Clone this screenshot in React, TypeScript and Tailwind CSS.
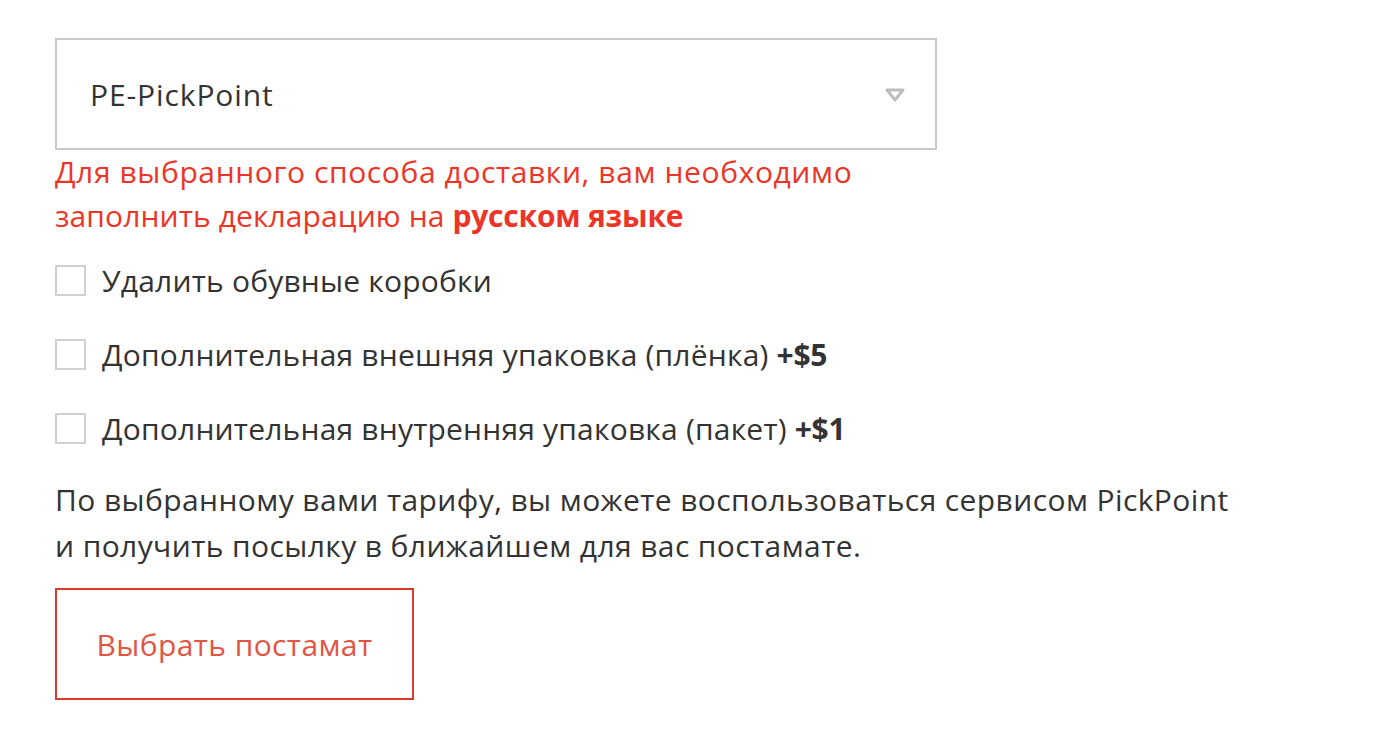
import React from "react";

const font = { fontFamily: '"Open Sans", "Noto Sans", sans-serif' };

function Check({ children }: { children: React.ReactNode }) {
  return (
    <label className="flex items-center h-[31px]">
      <span className="w-[31px] h-[31px] border-2 border-[#d0d0d0] bg-white shrink-0" />
      <span className="ml-[16px] text-[30px] tracking-[0.2px] text-[#333333] leading-none whitespace-nowrap">
        {children}
      </span>
    </label>
  );
}

export default function App() {
  return (
    <div className="min-h-screen bg-white pl-[55px] pt-[38px]" style={font}>
      {/* select */}
      <div className="w-[882px] h-[112px] border-2 border-[#c8c8c8] flex items-center justify-between pl-[33px] pr-[30px]">
        <span className="text-[30px] tracking-[0.9px] text-[#333333]">PE-PickPoint</span>
        <svg width="20" height="14" viewBox="0 0 20 14" className="mt-[2px]">
          <path d="M2 2 H18 L10 12 Z" fill="none" stroke="#bdbdbd" strokeWidth="3" strokeLinejoin="round" />
        </svg>
      </div>

      <p className="text-[30px] tracking-[0.6px] leading-[44px] text-[#ec3527] w-[900px]">
        Для выбранного способа доставки, вам необходимо
        <br />
        <span className="tracking-[0.1px]">заполнить декларацию на </span>
        <b className="font-bold tracking-[-0.2px]">русском языке</b>
      </p>

      <div className="mt-[27px] flex flex-col gap-[43px]">
        <Check>Удалить обувные коробки</Check>
        <Check>
          Дополнительная внешняя упаковка (плёнка) <b className="font-bold tracking-[-0.3px]">+$5</b>
        </Check>
        <Check>
          Дополнительная внутренняя упаковка (пакет) <b className="font-bold tracking-[-0.3px]">+$1</b>
        </Check>
      </div>

      <p className="mt-[33px] text-[30px] tracking-[0.4px] leading-[46px] text-[#333333]">
        По выбранному вами тарифу, вы можете воспользоваться сервисом PickPoint
        <br />
        и получить посылку в ближайшем для вас постамате.
      </p>

      <button className="mt-[19px] w-[359px] h-[112px] border-2 border-[#d93a2b] text-[30px] tracking-[0.4px] text-[#e25545] bg-white">
        Выбрать постамат
      </button>
    </div>
  );
}
